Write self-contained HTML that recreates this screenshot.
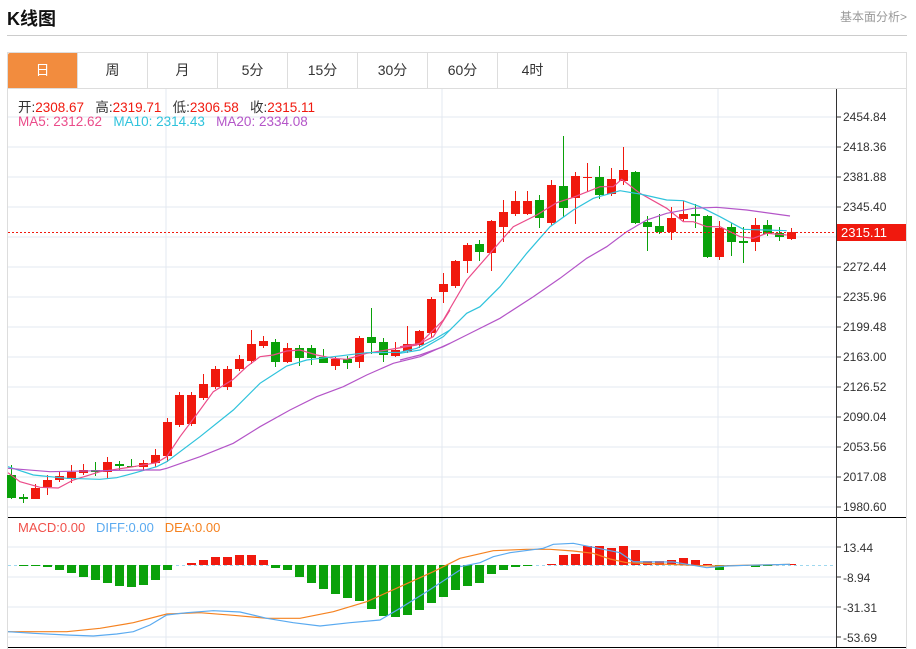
<!DOCTYPE html>
<html><head><meta charset="utf-8"><style>
body{margin:0;width:916px;height:649px;background:#fff;font-family:"Liberation Sans","Noto Sans CJK SC",sans-serif;position:relative;overflow:hidden}
.t{position:absolute;white-space:nowrap}
.tab{position:absolute;top:53px;height:35px;width:70px;line-height:35px;text-align:center;font-size:14px;color:#333;border-right:1px solid #ddd;box-sizing:border-box}
</style></head><body>
<div class="t" style="left:7px;top:5px;font-size:18px;font-weight:bold;color:#111">K线图</div>
<div class="t" style="right:9px;top:8px;font-size:12px;color:#999">基本面分析&gt;</div>
<div style="position:absolute;left:7px;top:35px;width:900px;height:1px;background:#ccc"></div>
<div style="position:absolute;left:7px;top:52px;width:898px;height:596px;border:1px solid #ddd;border-bottom:none"></div>
<div style="position:absolute;left:8px;top:88px;width:898px;height:1px;background:#ddd"></div>
<div class="tab" style="left:8px;background:#f28c3e;color:#fff;border-radius:2px 0 0 0">日</div>
<div class="tab" style="left:78px">周</div>
<div class="tab" style="left:148px">月</div>
<div class="tab" style="left:218px">5分</div>
<div class="tab" style="left:288px">15分</div>
<div class="tab" style="left:358px">30分</div>
<div class="tab" style="left:428px">60分</div>
<div class="tab" style="left:498px">4时</div>
<svg id="s" width="916" height="649" style="position:absolute;left:0;top:0">
<g font-family="Liberation Sans, Noto Sans CJK SC, sans-serif" font-size="12" fill="#333">
<text x="843" y="121">2454.84</text><text x="843" y="151">2418.36</text><text x="843" y="181">2381.88</text><text x="843" y="211">2345.40</text><text x="843" y="241">2308.92</text><text x="843" y="271">2272.44</text><text x="843" y="301">2235.96</text><text x="843" y="331">2199.48</text><text x="843" y="361">2163.00</text><text x="843" y="391">2126.52</text><text x="843" y="421">2090.04</text><text x="843" y="451">2053.56</text><text x="843" y="481">2017.08</text><text x="843" y="511">1980.60</text>
<text x="843" y="552">13.44</text><text x="843" y="582">-8.94</text><text x="843" y="612">-31.31</text><text x="843" y="642">-53.69</text>
</g>
</svg>
<div class="t" style="left:18px;top:96px;font-size:13.5px;color:#333">开:<span style="color:#f0190e">2308.67</span>&nbsp;&nbsp; 高:<span style="color:#f0190e">2319.71</span>&nbsp;&nbsp; 低:<span style="color:#f0190e">2306.58</span>&nbsp;&nbsp; 收:<span style="color:#f0190e">2315.11</span></div>
<div class="t" style="left:18px;top:114px;font-size:13.5px"><span style="color:#eb4c8a">MA5:&nbsp;2312.62</span>&nbsp;&nbsp; <span style="color:#2fc3dc">MA10:&nbsp;2314.43</span>&nbsp;&nbsp; <span style="color:#b455c8">MA20:&nbsp;2334.08</span></div>
<div class="t" style="left:18px;top:520px;font-size:13px"><span style="color:#f0504a">MACD:0.00</span>&nbsp;&nbsp; <span style="color:#5aaaf0">DIFF:0.00</span>&nbsp;&nbsp; <span style="color:#f58220">DEA:0.00</span></div>
<div class="t" style="left:837px;top:224px;width:69px;height:17px;background:#f0190e;color:#fff;font-size:13px;line-height:17px;padding-left:4px;box-sizing:border-box">2315.11</div>
<script>
var s=document.getElementById('s'),h='';
function L(x1,y1,x2,y2,c,w,d){h+='<line x1="'+x1+'" y1="'+y1+'" x2="'+x2+'" y2="'+y2+'" stroke="'+c+'" stroke-width="'+(w||1)+'"'+(d?' stroke-dasharray="'+d+'"':'')+'/>';}
for(var y=117;y<=507;y+=30)L(8,y,836,y,'#e3e9f0');
for(var y=547;y<=637;y+=30)L(8,y,836,y,'#e3e9f0');
[166,442,718].forEach(function(x){L(x,89,x,647,'#e3e9f0')});
L(8,517.5,906,517.5,'#000');L(8,647.5,906,647.5,'#000');L(836.5,89,836.5,647,'#333');
for(var y=117;y<=507;y+=30)L(836,y,841,y,'#333');
for(var y=547;y<=637;y+=30)L(836,y,841,y,'#333');
var C=[[11,'g',475,498,465,499],[23,'g',497,499,494,503],[35,'r',488,499,484,499],[47,'r',480,487,475,495],[59,'r',476,480,472,482],[71,'r',472,479,465,483],[83,'r',470,473,464,475],[95,'g',470,472,462,476],[107,'r',462,472,457,478],[119,'g',464,466,461,470],[131,'g',466,467,459,467],[143,'r',463,467,460,471],[155,'r',455,463,449,467],[167,'r',422,456,418,462],[179,'r',395,425,392,427],[191,'r',395,424,392,426],[203,'r',384,398,374,400],[215,'r',369,387,366,389],[227,'r',369,387,366,390],[239,'r',359,369,355,371],[251,'r',344,361,330,364],[263,'r',341,346,336,348],[275,'g',342,362,339,367],[287,'r',348,362,343,363],[299,'g',348,358,345,366],[311,'g',348,358,345,365],[323,'g',357,363,349,363],[335,'r',359,366,357,370],[347,'g',359,363,356,369],[359,'r',338,362,336,368],[371,'g',337,343,308,354],[383,'g',342,355,338,362],[395,'r',350,356,342,357],[407,'r',344,351,326,353],[419,'r',331,345,330,348],[431,'r',299,333,297,337],[443,'r',284,292,273,303],[455,'r',261,286,260,288],[467,'r',245,261,243,273],[479,'g',244,252,240,261],[491,'r',221,253,220,271],[503,'r',212,227,200,242],[515,'r',201,214,191,216],[527,'r',201,214,191,215],[539,'g',200,218,195,228],[551,'r',185,223,180,225],[563,'g',186,208,136,217],[575,'r',176,198,172,224],[587,'r',177,178,163,192],[599,'g',177,195,166,199],[611,'r',179,194,168,196],[623,'r',170,181,147,185],[635,'g',172,223,171,224],[647,'g',222,227,216,251],[659,'g',226,232,214,234],[671,'r',218,232,207,240],[683,'r',214,219,201,221],[695,'g',214,216,204,228],[707,'g',216,257,215,258],[719,'r',228,257,221,260],[731,'g',227,242,223,256],[743,'g',241,243,227,263],[755,'r',225,242,218,251],[767,'g',225,234,220,236],[779,'g',233,237,227,241],[791,'r',232,239,228,240]];
C.forEach(function(c){var col=c[1]=='r'?'#f0190e':'#0aa10a';L(c[0]+.5,c[4],c[0]+.5,c[5],col);h+='<rect x="'+(c[0]-4)+'" y="'+c[2]+'" width="9" height="'+Math.max(1,c[3]-c[2])+'" fill="'+col+'"/>';});
function P(pts,c,sx,ox,oy){var a=[];for(var i=0;i<pts.length;i+=2)a.push((pts[i]/sx+ox).toFixed(1)+','+(pts[i+1]/sx+oy).toFixed(1));h+='<polyline points="'+a.join(' ')+'" fill="none" stroke="'+c+'" stroke-width="1.2"/>';}
P([24,548,60,575,120,592,175,594,220,570,300,545,400,530,470,518,500,500,540,440,600,360,640,305,700,268,740,230,780,200,820,195,860,183,900,180,950,195,1000,205,1040,208,1100,190,1160,180,1250,165,1300,140,1350,60],'#eb4c8a',3,0,290);
P([0,680,60,670,130,600,200,480,270,400,340,320,410,285,470,248,520,232,600,200,640,200,665,178,720,220,800,265,850,305,880,305,920,320,960,320,1020,350,1060,355,1100,340,1160,345],'#eb4c8a',3,400,120);
P([24,530,100,555,200,565,300,568,350,563,400,550,470,530,500,515,600,440,700,360,780,280,860,228,920,210,1000,200,1100,188,1200,187,1250,175,1300,150,1350,120],'#2fc3dc',3,0,290);
P([0,700,60,690,130,650,200,580,240,560,300,500,380,400,450,320,520,270,580,235,660,212,720,222,800,240,850,242,900,260,960,290,1030,328,1160,332],'#2fc3dc',3,400,120);
P([24,535,150,545,300,542,420,540,480,540,500,535,600,500,700,460,780,410,870,360,950,320,1030,290,1100,255,1180,220,1260,200,1350,160],'#b455c8',3,0,290);
P([0,720,60,705,130,680,200,645,300,595,400,530,480,475,560,415,620,380,680,335,740,300,800,280,880,265,950,262,1040,270,1170,288],'#b455c8',3,400,120);
L(8,232.5,836,232.5,'#f0190e',1,'2,2');
L(8,565.5,836,565.5,'#9fd8ef',1,'3,3');
var B=[[23,566],[35,566],[47,567],[59,570],[71,573],[83,577],[95,580],[107,583],[119,586],[131,587],[143,585],[155,580],[167,570],[191,563],[203,560],[215,557],[227,557],[239,555],[251,555],[263,560],[275,568],[287,570],[299,577],[311,583],[323,589],[335,594],[347,598],[359,601],[371,609],[383,616],[395,617],[407,615],[419,610],[431,603],[443,597],[455,590],[467,586],[479,583],[491,574],[503,570],[515,567],[527,566],[551,564],[563,555],[575,554],[587,546],[599,546],[611,548],[623,546],[635,550],[647,561],[659,561],[671,560],[683,558],[695,560],[707,564],[719,570],[731,566],[743,566],[755,567],[767,566],[791,564]];
B.forEach(function(b){var z=565,y=Math.min(z,b[1]),hh=Math.abs(b[1]-z)||1,col=b[1]<z?'#f0190e':'#0aa10a';h+='<rect x="'+(b[0]-4)+'" y="'+y+'" width="9" height="'+hh+'" fill="'+col+'"/>';});
P([24,575,200,575,300,565,400,548,500,522,600,518,700,526,800,535,900,535,1000,515,1100,485,1200,440,1300,395,1380,355],'#f58220',3,0,440);
P([0,355,100,332,200,328,270,328,340,333,400,340,450,357,500,368,600,372,700,376,760,378,990,373],'#f58220',3,460,440);
P([24,575,100,580,200,585,280,588,350,582,400,575,450,555,500,525,560,518,640,512,720,516,800,535,880,548,960,558,1050,548,1140,540,1200,505,1280,455,1380,390],'#5aaaf0',3,0,440);
P([0,380,60,368,100,350,150,338,250,325,280,313,340,310,400,322,480,338,520,365,640,366,700,376,740,383,800,378,860,376,990,373],'#5aaaf0',3,460,440);
s.insertAdjacentHTML('afterbegin',h);
</script>
</body></html>
